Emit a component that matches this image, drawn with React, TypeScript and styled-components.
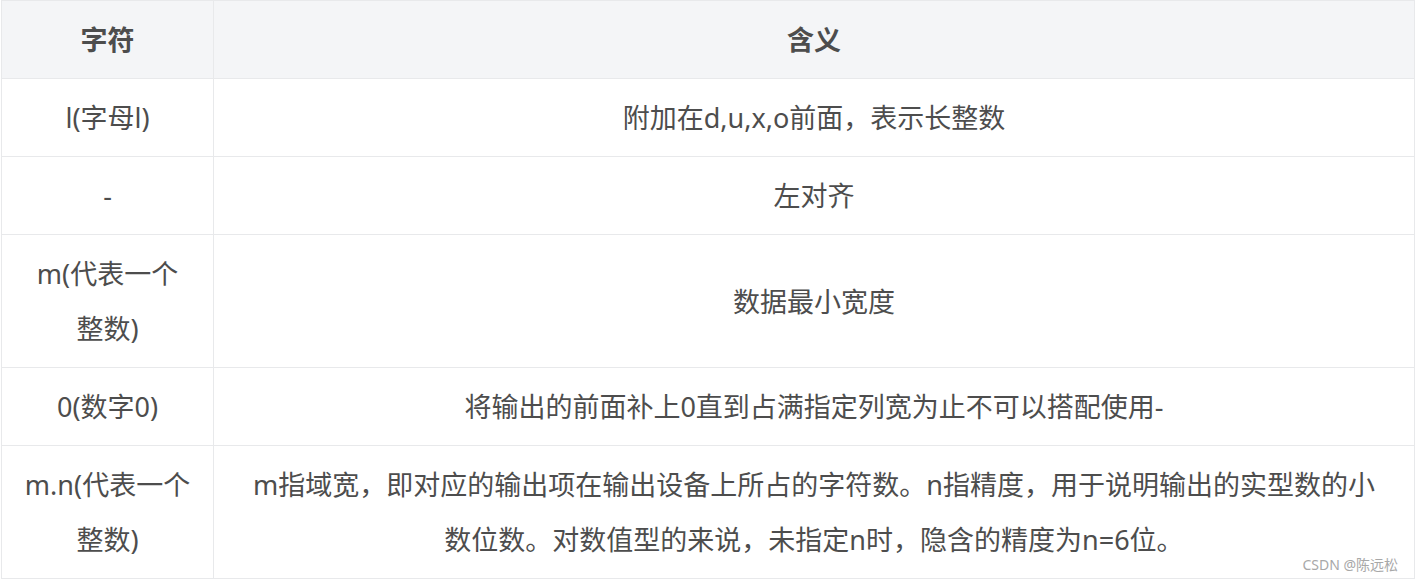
import React from "react";
import styled, { createGlobalStyle } from "styled-components";

const GlobalStyle = createGlobalStyle`
  html, body {
    margin: 0;
    padding: 0;
    background: #ffffff;
  }
`;

const Page = styled.div`
  position: relative;
  width: 1415px;
  height: 581px;
  padding-left: 1px;
  box-sizing: border-box;
  font-family: "Noto Sans", "Noto Sans CJK SC", sans-serif;
  color: #4d4d4d;
`;

const Table = styled.table`
  width: 1414px;
  border-collapse: collapse;
  table-layout: fixed;
  font-size: 27px;
`;

const HeadRow = styled.tr`
  background-color: #f4f5f7;
`;

const HeadCell = styled.th<{ $width?: number }>`
  box-sizing: border-box;
  width: ${(p) => (p.$width ? `${p.$width}px` : "auto")};
  border: 1px solid #e8e9eb;
  padding: 11px 22px;
  line-height: 55px;
  font-weight: 700;
  text-align: center;
`;

const Cell = styled.td<{ $wide?: boolean }>`
  border: 1px solid #e8e9eb;
  padding: ${(p) => (p.$wide ? "11px 32px" : "11px 22px")};
  line-height: 55px;
  text-align: center;
  word-break: break-all;
`;

const Watermark = styled.div`
  position: absolute;
  right: 17px;
  bottom: 7px;
  font-size: 14px;
  line-height: 18px;
  color: #a8a8a8;
`;

const rows: [string, string][] = [
  ["l(字母l)", "附加在d,u,x,o前面，表示长整数"],
  ["-", "左对齐"],
  ["m(代表一个整数)", "数据最小宽度"],
  ["0(数字0)", "将输出的前面补上0直到占满指定列宽为止不可以搭配使用-"],
  [
    "m.n(代表一个整数)",
    "m指域宽，即对应的输出项在输出设备上所占的字符数。n指精度，用于说明输出的实型数的小数位数。对数值型的来说，未指定n时，隐含的精度为n=6位。",
  ],
];

const App: React.FC = () => (
  <>
    <GlobalStyle />
    <Page>
      <Table>
        <thead>
          <HeadRow>
            <HeadCell $width={212}>字符</HeadCell>
            <HeadCell>含义</HeadCell>
          </HeadRow>
        </thead>
        <tbody>
          {rows.map(([sign, meaning]) => (
            <tr key={sign}>
              <Cell>{sign}</Cell>
              <Cell $wide>{meaning}</Cell>
            </tr>
          ))}
        </tbody>
      </Table>
      <Watermark>CSDN @陈远松</Watermark>
    </Page>
  </>
);

export default App;
